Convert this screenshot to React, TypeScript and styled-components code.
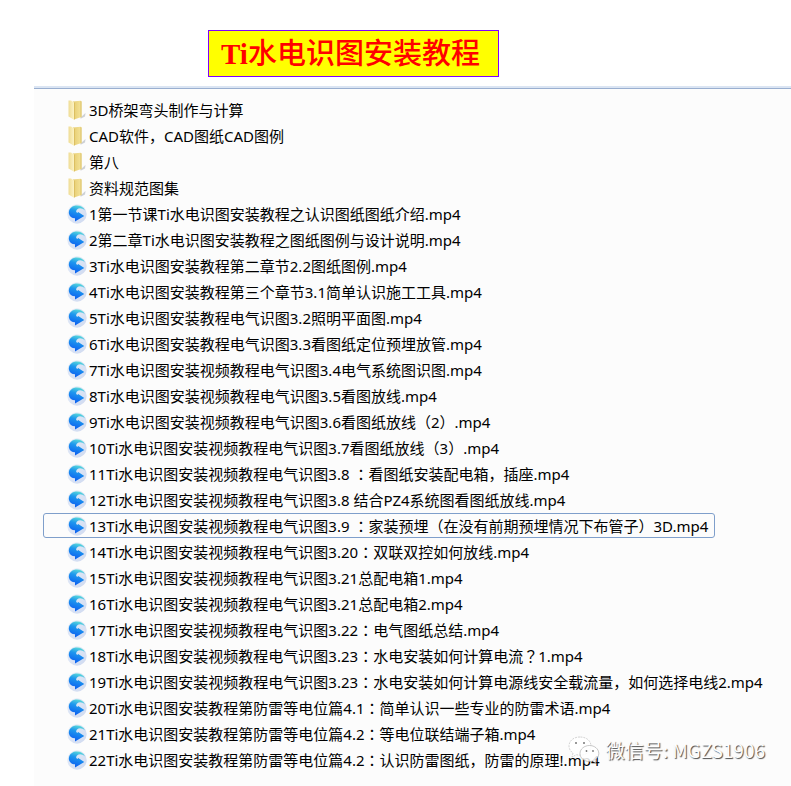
import React from 'react';
import styled, { createGlobalStyle } from 'styled-components';

const GlobalStyle = createGlobalStyle`
  * { box-sizing: border-box; }
  body { margin: 0; background: #ffffff; }
`;

const Page = styled.div`
  position: relative;
  display: flex;
  flex-direction: column;
  min-height: 100vh;
  padding-top: 30px;
  overflow: hidden;
`;

const Title = styled.h1`
  align-self: flex-start;
  display: flex;
  align-items: center;
  height: 47px;
  margin: 0 0 11px 208px;
  padding: 0 18px 0 12px;
  border: 1px solid #8000ff;
  background: #ffff00;
  color: #ff0000;
  font: 500 29px/44px 'Liberation Serif', 'Noto Sans CJK SC', serif;
  white-space: nowrap;
`;

const Latin = styled.span`
  font-weight: 700;
`;

const Panel = styled.main`
  flex: 1;
  margin-left: 34px;
  padding: 8px 0 0 9px;
  border-top: 1px solid #9aafd0;
  box-shadow: 0 -2px 0 #dbe5f3;
  background: #fcfcfc;
`;

const FileList = styled.ul`
  display: flex;
  flex-direction: column;
  align-items: flex-start;
  gap: 1px;
  margin: 0;
  padding: 0;
  list-style: none;
`;

const FileRow = styled.li<{ $focused?: boolean }>`
  display: flex;
  align-items: center;
  gap: 2px;
  height: 25px;
  padding: 0 6px 0 23px;
  border: 1px solid ${(p) => (p.$focused ? '#7f9fcb' : 'transparent')};
  border-radius: 3px;
  color: #000000;
  font: 400 15px/22px 'Noto Sans', 'Noto Sans CJK SC', sans-serif;
  white-space: pre;
`;

const CenteredMark = styled.span`
  font-family: 'Noto Sans CJK JP', sans-serif;
`;

const Icon = styled.svg`
  flex: none;
  width: 20px;
  height: 20px;
`;

const GradientDefs = styled.svg`
  display: block;
  width: 0;
  height: 0;
`;

const Watermark = styled.div`
  position: absolute;
  right: 26px;
  bottom: 20px;
  display: flex;
  align-items: center;
  gap: 6px;
  color: #fdfdfd;
  font: 400 19px/32px 'Noto Sans CJK SC', sans-serif;
  text-shadow: 1px 1px 1px #4a4a4a;
  white-space: nowrap;
`;

const ChatLogo = styled.svg`
  width: 32px;
  height: 28px;
`;

const folders = ['3D桥架弯头制作与计算', 'CAD软件，CAD图纸CAD图例', '第八', '资料规范图集'];

const videos = [
  '1第一节课Ti水电识图安装教程之认识图纸图纸介绍.mp4',
  '2第二章Ti水电识图安装教程之图纸图例与设计说明.mp4',
  '3Ti水电识图安装教程第二章节2.2图纸图例.mp4',
  '4Ti水电识图安装教程第三个章节3.1简单认识施工工具.mp4',
  '5Ti水电识图安装教程电气识图3.2照明平面图.mp4',
  '6Ti水电识图安装教程电气识图3.3看图纸定位预埋放管.mp4',
  '7Ti水电识图安装视频教程电气识图3.4电气系统图识图.mp4',
  '8Ti水电识图安装视频教程电气识图3.5看图放线.mp4',
  '9Ti水电识图安装视频教程电气识图3.6看图纸放线（2）.mp4',
  '10Ti水电识图安装视频教程电气识图3.7看图纸放线（3）.mp4',
  '11Ti水电识图安装视频教程电气识图3.8 ：看图纸安装配电箱，插座.mp4',
  '12Ti水电识图安装视频教程电气识图3.8 结合PZ4系统图看图纸放线.mp4',
  '13Ti水电识图安装视频教程电气识图3.9 ：家装预埋（在没有前期预埋情况下布管子）3D.mp4',
  '14Ti水电识图安装视频教程电气识图3.20：双联双控如何放线.mp4',
  '15Ti水电识图安装视频教程电气识图3.21总配电箱1.mp4',
  '16Ti水电识图安装视频教程电气识图3.21总配电箱2.mp4',
  '17Ti水电识图安装视频教程电气识图3.22：电气图纸总结.mp4',
  '18Ti水电识图安装视频教程电气识图3.23：水电安装如何计算电流？1.mp4',
  '19Ti水电识图安装视频教程电气识图3.23：水电安装如何计算电源线安全载流量，如何选择电线2.mp4',
  '20Ti水电识图安装教程第防雷等电位篇4.1：简单认识一些专业的防雷术语.mp4',
  '21Ti水电识图安装教程第防雷等电位篇4.2：等电位联结端子箱.mp4',
  '22Ti水电识图安装教程第防雷等电位篇4.2：认识防雷图纸，防雷的原理!.mp4',
];

const focusedVideo = 12;

function FolderIcon() {
  return (
    <Icon viewBox="0 0 20 20" aria-hidden="true">
      <path d="M13 18 18.5 13 18 16.500 14 18.500Z" fill="#b9bdc4" opacity=".7" />
      <path d="M6 1.500 13.500 .8 14.500 1.500V17L7 19.500Z" fill="url(#folderBack)" />
      <path d="M13.500 .8 14.500 1.500V17L13.500 17.400Z" fill="#d9c06a" />
      <path d="M1.500 .6 4 .5 7 2.500V19.700L1.500 16.500Z" fill="url(#folderFront)" />
      <path d="M7 2.500V19.700L7.800 19.300V3Z" fill="#cfae4a" opacity=".6" />
    </Icon>
  );
}

function VideoIcon() {
  return (
    <Icon viewBox="0 0 20 20" aria-hidden="true">
      <circle cx="10" cy="10" r="9.7" fill="url(#discRim)" />
      <path
        d="M18 6.500C16.500 2.600 12.500 1 8.500 1.500 4 2.200 1.400 6 1.900 9.500 2.400 12.500 4.800 14.300 8 14.300V17.500L17.300 12 10.800 7.800V9C9 8.800 8.600 7 10 5.500 12 3.600 15.500 3.800 18 6.500Z"
        fill="url(#discArrow)"
      />
    </Icon>
  );
}

function IconGradients() {
  return (
    <GradientDefs aria-hidden="true">
      <defs>
        <linearGradient id="folderFront" x1="0" x2="1">
          <stop offset="0" stopColor="#efdc94" />
          <stop offset="1" stopColor="#fcf3c4" />
        </linearGradient>
        <linearGradient id="folderBack" x1="0" x2="1">
          <stop offset="0" stopColor="#e6cc70" />
          <stop offset="1" stopColor="#f5e49a" />
        </linearGradient>
        <linearGradient id="discRim" x1="0" y1="0" x2="1" y2="1">
          <stop offset="0" stopColor="#e6eef9" />
          <stop offset="1" stopColor="#cfd9f0" />
        </linearGradient>
        <linearGradient id="discArrow" x1="0.7" y1="0" x2="0.4" y2="1">
          <stop offset="0" stopColor="#5fe0d8" />
          <stop offset=".4" stopColor="#1d97ee" />
          <stop offset="1" stopColor="#0b5cf0" />
        </linearGradient>
      </defs>
    </GradientDefs>
  );
}

function FileName({ name }: { name: string }) {
  return (
    <span>
      {name.split(/([：？])/).map((part, i) =>
        i % 2 === 1 ? (
          <CenteredMark key={i} lang="ja">
            {part}
          </CenteredMark>
        ) : (
          part
        ),
      )}
    </span>
  );
}

export default function App() {
  return (
    <Page lang="zh-CN">
      <GlobalStyle />
      <IconGradients />
      <Title>
        <Latin>Ti</Latin>水电识图安装教程
      </Title>
      <Panel>
        <FileList>
          {folders.map((name) => (
            <FileRow key={name}>
              <FolderIcon />
              <FileName name={name} />
            </FileRow>
          ))}
          {videos.map((name, i) => (
            <FileRow key={name} $focused={i === focusedVideo}>
              <VideoIcon />
              <FileName name={name} />
            </FileRow>
          ))}
        </FileList>
      </Panel>
      <Watermark>
        <ChatLogo viewBox="0 0 32 28" aria-hidden="true">
          <path d="M12 1C5.4 1 1 5 1 10c0 3 1.6 5.400 4 7l-1 4 4.500-2.300c1.200.3 2.300.4 3.500.4 6.500 0 11-4 11-9.100S18.500 1 12 1Z" fill="#fff" stroke="#b5b5b5" strokeWidth=".6" strokeDasharray="2 1" />
          <path d="M21.500 9.500c-5 0-9.500 3.400-9.500 8s4.200 8 9.500 8c1 0 2-.1 3-.4l3.500 2-1-3.300c2.200-1.500 3.800-3.600 3.800-6.300 0-4.600-4.300-8-9.300-8Z" fill="#fff" fillOpacity=".85" stroke="#a5a5a5" strokeWidth=".6" />
          <g fill="#777">
            <circle cx="8" cy="7" r="1" />
            <circle cx="16" cy="7" r="1" />
            <circle cx="18.500" cy="15" r=".9" />
            <circle cx="25" cy="15" r=".9" />
          </g>
        </ChatLogo>
        <span>微信号: MGZS1906</span>
      </Watermark>
    </Page>
  );
}
